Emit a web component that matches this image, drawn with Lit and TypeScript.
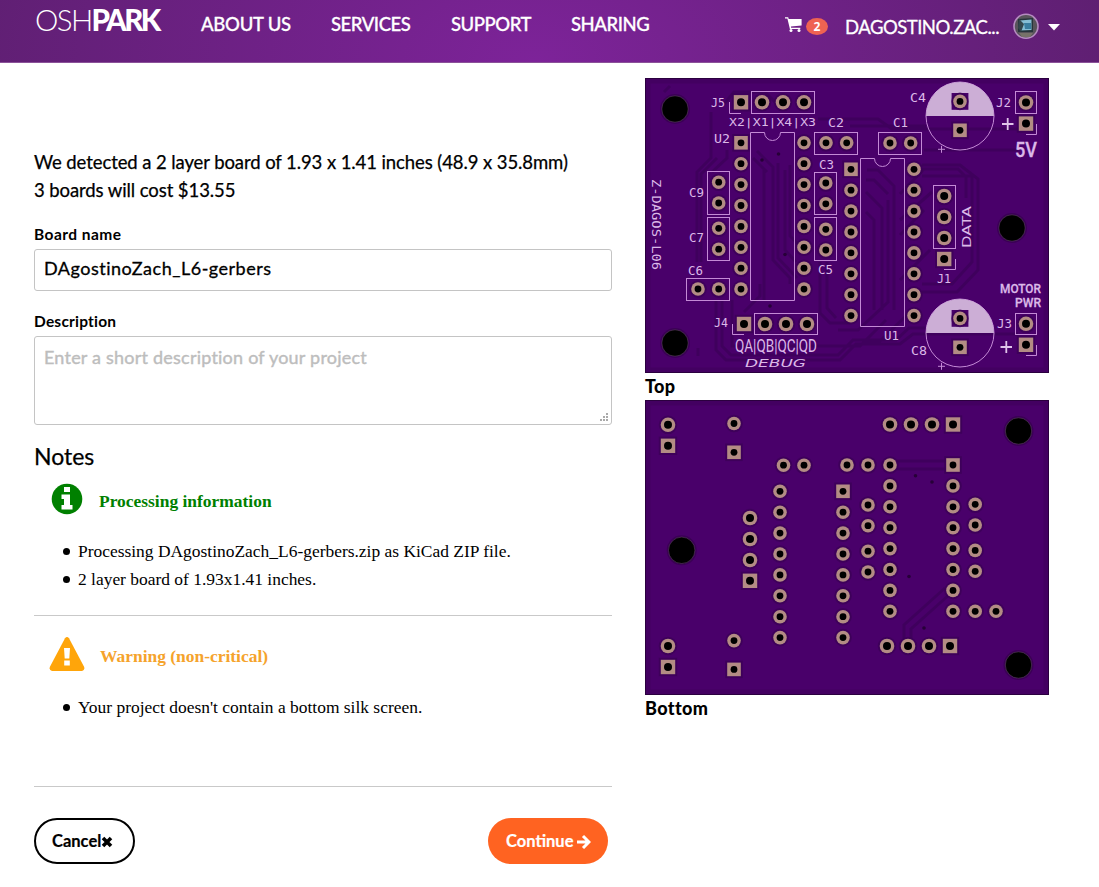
import { LitElement, html, svg, css } from "lit";
import { customElement } from "lit/decorators.js";

type Pt = [number, number];

const ring = (x: number, y: number, hole = 3.4) =>
  svg`<circle class="pad" cx=${x} cy=${y} r=${hole > 3.5 ? 7.3 : 6.8}></circle><circle class="drill" cx=${x} cy=${y} r=${hole}></circle>`;
const square = (x: number, y: number, hole = 3.4) => {
  const h = hole > 3.5 ? 7.2 : 6.8;
  return svg`<rect class="pad" x=${x - h} y=${y - h} width=${h * 2} height=${h * 2}></rect><circle class="drill" cx=${x} cy=${y} r=${hole}></circle>`;
};
const column = (x: number, y: number, n: number, first = false) =>
  Array.from({ length: n }, (_, i) => (first && i === 0 ? square(x, y) : ring(x, y + i * 20.9)));
const mount = (x: number, y: number) =>
  svg`<circle class="halo" cx=${x} cy=${y} r="15"></circle><circle class="mount" cx=${x} cy=${y} r="13.2"></circle>`;
const via = ([x, y]: Pt) => svg`<circle class="via" cx=${x} cy=${y} r="1.8"></circle>`;
const box = (x: number, y: number, x2: number, y2: number) =>
  svg`<rect class="silk" x=${x} y=${y} width=${x2 - x} height=${y2 - y}></rect>`;
const label = (t: string, x: number, y: number, w: number, size = 12.5, cls = "") =>
  svg`<text class="mark ${cls}" x=${x} y=${y} font-size=${size} textLength=${w} lengthAdjust="spacingAndGlyphs">${t}</text>`;
const cap = (cy: number) => svg`
  <circle class="silk" cx="960" cy=${cy} r="34"></circle>
  <path class="fill" d="M926 ${cy}a34 34 0 0 1 68 0z"></path>
  <rect class="board" x="951.6" y=${cy - 23} width="16.8" height="16.8"></rect>
  ${ring(960, cy - 14.6)}${square(960, cy + 14.3)}
  <path class="silk" d="M938 ${cy + 33.3}h7M941.5 ${cy + 29.8}v7"></path>`;

@customElement("pcb-top")
class PcbTop extends LitElement {
  static styles = css`
    :host { display: block; height: 295px; font-weight: 400; letter-spacing: 0; }
    svg { display: block; }
    .board { fill: #49006a; }
    .edge { fill: none; stroke: #2b003f; stroke-width: 1; }
    .inner { fill: none; stroke: #40005c; stroke-width: 5; opacity: 0.6; }
    .trace { fill: none; stroke: #3a0055; stroke-width: 3; opacity: 0.62; }
    .pad { fill: #b38c84; stroke: #3b0056; stroke-opacity: 0.75; stroke-width: 4; paint-order: stroke; }
    .drill, .mount { fill: #000; }
    .mount { stroke: #6a4a70; stroke-width: 0.5; }
    .halo { fill: #3b0056; }
    .via { fill: #270038; }
    .silk { fill: none; stroke: #c48ad6; stroke-width: 1; }
    .thick { fill: none; stroke: #e0c4ea; stroke-width: 1.8; }
    .fill { fill: #ccaed6; }
    .mark { fill: #dcb9e8; font-family: "DejaVu Sans Mono", monospace; }
    .narrow { font-family: "Roboto", sans-serif; }
    .medium { font-weight: 500; stroke: #dcb9e8; stroke-width: 0.3; }
    .wide { font-family: "DejaVu Sans", sans-serif; }
    .slant { font-style: oblique; }
  `;
  render() {
    return html`<svg width="404" height="295" viewBox="645 78 404 295">
      <rect class="board" x="645" y="78" width="404" height="295"></rect>
      <rect class="inner" x="648" y="81" width="398" height="289"></rect>
      <path class="trace" d="M711 112V158L697 172V262M717 158L701 174V262M724 104L734 92H765L782 109M727 150V158L712 172M753 158L767 172M757 151L773 167V260L790 278V284
        M764 170V300M778 163V258L797 278M785 170V250L796 262M790 165V236L798 244M716 300V350L726 360H840L856 344H900L913 334H1018M722 300V346L731 355H838L853 340H896L909 328H925
        M760 284V296L744 312M820 262V313L830 323H850M827 262V308L836 318M732 300V346H860L886 320M838 330H858L888 302V200M862 341H880L910 312M842 119H878L892 129H1018M850 126H926M924 150H1018
        M867 170H878L894 186V310M866 180H874L888 194M866 192L882 208V310M866 212L874 220V310M900 194L924 169H958L966 177V198M922 176H950L972 176V262L952 284H922M922 165H960L978 179V270L957 292H922
        M900 220L932 192M900 235L924 210M900 280L930 250M818 119H840M698 348V356M664 92L670 86"></path>
      ${mount(675, 109)}${mount(1012, 228)}${mount(675, 343)}
      ${([[762, 160], [778.5, 154], [785, 254.5], [770, 306]] as Pt[]).map(via)}
      ${square(741, 102.3, 4)}${[762, 783, 804].map((x) => ring(x, 102.3, 4))}
      ${square(744, 324, 4)}${[765, 786, 807].map((x) => ring(x, 324, 4))}
      ${[196, 217, 238].map((y) => ring(944.2, y, 4))}${square(944.2, 259, 4)}
      ${ring(1026, 102.5, 4)}${square(1026, 123.6, 4)}${ring(1026, 323.8, 4)}${square(1026, 344.8, 4)}
      ${column(741, 142.8, 8, true)}${column(804, 142.8, 8)}${column(851, 169.3, 8, true)}${column(914, 169.3, 8)}
      ${([[718.7, 182.2], [718.7, 203], [718.7, 228.3], [718.7, 249.2], [698, 289], [718.7, 289], [826, 142.8], [846.7, 142.8],
        [825.8, 183], [825.8, 203.8], [825.8, 229.3], [825.8, 250], [890, 143], [910.7, 143]] as Pt[]).map(([x, y]) => ring(x, y))}
      ${box(751.5, 91.5, 814.5, 113.5)}${box(814.5, 132.5, 857.5, 154.5)}${box(878.5, 132.5, 921.5, 154.5)}
      ${box(707.5, 171.5, 729.5, 214.5)}${box(707.5, 217.5, 729.5, 260.5)}${box(686.5, 278.5, 729.5, 300.5)}
      ${box(814.5, 172.5, 836.5, 214.5)}${box(814.5, 217.5, 836.5, 260.5)}${box(754.5, 313.5, 817.5, 334.5)}
      ${box(933.5, 185.5, 955.5, 248.5)}${box(1015.5, 91.5, 1036.5, 113.5)}${box(1015.5, 313.5, 1036.5, 334.5)}
      <path class="silk" d="M764.5 132.5H750.5V300.5H794.5V132.5H780.5A8 8 0 0 1 764.5 132.5M874.5 158.5H860.5V326.5H904.5V158.5H890.5A8 8 0 0 1 874.5 158.5
        M729.5 102V113.5H741M732.5 324V334.5H744M1036.5 124V134.5H1026M1036.5 345V355.5H1026M955.5 259V269.5H944"></path>
      <path class="thick" d="M1002 124H1013.5M1007.7 118V130M1000.5 347H1012M1006.3 341V353"></path>
      ${cap(116)}${cap(333)}
      ${label("J5", 711, 107, 14)}${label("U2", 714, 143, 16)}${label("C9", 689, 197, 15)}${label("C7", 689, 242, 15)}
      ${label("C6", 688, 275, 15)}${label("J4", 714, 327, 14)}${label("C2", 828, 127, 16)}${label("C3", 819, 169, 15)}
      ${label("C5", 818, 274, 15)}${label("C1", 893, 127, 15)}${label("C4", 910, 102, 16)}${label("J2", 996, 107, 15)}
      ${label("J1", 937, 283, 14)}${label("U1", 884, 340, 15)}${label("C8", 911, 355, 16)}${label("J3", 997, 328, 15)}
      ${label("X2|X1|X4|X3", 729, 126, 87, 10.5)}
      ${label("QA|QB|QC|QD", 735, 352, 82, 18.5, "narrow")}
      ${label("DEBUG", 745, 367, 61, 11, "wide slant")}
      ${label("5V", 1015, 157, 22, 19.5, "narrow medium")}
      ${label("MOTOR", 1000, 293, 41, 13.5, "narrow medium")}${label("PWR", 1015, 307, 26, 13.5, "narrow medium")}
      <g transform="translate(970.5 248) rotate(-90)">${label("DATA", 0, 0, 42, 12.5, "wide")}</g>
      <g transform="translate(652 179) rotate(90)">${label("Z-DAGOS-L06", 0, 0, 91, 12.5)}</g>
      <rect class="edge" x="645.5" y="78.5" width="403" height="294"></rect>
    </svg>`;
  }
}

@customElement("pcb-bottom")
class PcbBottom extends LitElement {
  static styles = PcbTop.styles;
  render() {
    return html`<svg width="404" height="295" viewBox="645 400 404 295">
      <rect class="board" x="645" y="400" width="404" height="295"></rect>
      <rect class="inner" x="648" y="403" width="398" height="289"></rect>
      <path class="trace" d="M897 461H946M897 469H946M945 588L904 625V640M950 594L911 629V640"></path>
      ${mount(1018.5, 431)}${mount(681.7, 550.3)}${mount(1018.5, 665)}
      ${([[915.5, 475.7], [932, 482], [909, 576.5], [924, 628]] as Pt[]).map(via)}
      ${ring(668, 424.8, 4)}${square(668, 445.8, 4)}${ring(668, 646, 4)}${square(668, 667, 4)}
      ${ring(734, 423.5)}${square(734, 452.3)}${ring(734, 640.6)}${square(734, 669.4)}
      ${[890, 911, 932].map((x) => ring(x, 424.5, 4))}${square(953, 424.5, 4)}
      ${[887, 908, 929].map((x) => ring(x, 646, 4))}${square(950, 646, 4)}
      ${[518, 539, 560].map((y) => ring(750, y, 4))}${square(750, 580.8, 4)}
      ${column(780, 491.3, 8)}${column(843, 491.3, 8, true)}${column(890, 465, 8)}${column(953, 465, 8, true)}
      ${([[783.5, 465.2], [804, 465.2], [847, 465], [868, 465], [868, 505], [868, 525.7], [868, 551.2], [868, 572],
        [975.2, 504.3], [975.2, 525], [975.2, 550.4], [975.2, 571.3], [975.2, 611.3], [996, 611.3]] as Pt[]).map(([x, y]) => ring(x, y))}
      <rect class="edge" x="645.5" y="400.5" width="403" height="294"></rect>
    </svg>`;
  }
}

@customElement("app-root")
class AppRoot extends LitElement {
  static styles = css`
    :host { display: block; height: 887px; overflow: hidden; background: #fff; color: #000; font-family: "Lato", sans-serif; }
    * { box-sizing: border-box; }
    svg { display: block; flex: none; }
    header { height: 63px; display: flex; align-items: flex-start; padding-left: 35px; color: #fff; white-space: nowrap;
      border-bottom: 1px solid #8b5299; background: radial-gradient(ellipse 590px 330px at 535px 60px, #7d2399, #5e1f71); }
    .logo { width: 166px; font-size: 29.5px; line-height: 36px; padding-top: 2px; font-weight: 300; letter-spacing: -1.6px; }
    .logo b { font-weight: 900; letter-spacing: -2.6px; }
    nav { display: flex; gap: 40px; padding-top: 12px; width: 584px; font-size: 18.5px; line-height: 24px; letter-spacing: -0.45px; }
    .n { font-weight: 500; -webkit-text-stroke: 0.3px #fff; }
    .n1 { width: 90px; letter-spacing: -0.25px; } .n2 { width: 80px; } .n3 { width: 80px; }
    .cart { margin-top: 16px; }
    .badge { margin: 18px 0 0 4px; width: 22px; height: 17px; border-radius: 50%; background: #ee6352; text-align: center; font: 700 12px/17px "Open Sans", sans-serif; }
    .user { margin: 15px 0 0 17px; width: 168px; font-size: 18.5px; line-height: 24px; letter-spacing: -0.5px; -webkit-text-stroke: 0.3px #fff; }
    .avatar { margin-top: 13px; }
    .caret { margin: 24px 0 0 9px; }
    main { display: grid; grid-template-columns: 578px 404px; column-gap: 33px; padding-left: 34px; }
    .lead { margin: 85px 0 0; font-size: 18.5px; line-height: 28px; letter-spacing: -0.09px; -webkit-text-stroke: 0.25px #000; }
    .lead span { display: block; white-space: nowrap; }
    .field { display: block; margin-top: 20px; font-size: 15.5px; line-height: 20px; font-weight: 700; letter-spacing: 0.45px; }
    .field2 { letter-spacing: 0.2px; }
    .input { margin-top: 5px; height: 42px; border: 1px solid #c4c4c4; border-radius: 3px; padding: 0 9px; font-size: 18px; line-height: 37px; letter-spacing: 0.5px; -webkit-text-stroke: 0.3px #000; }
    .area { height: 89px; display: flex; align-items: flex-end; justify-content: space-between; padding: 0 3px 2px 9px; letter-spacing: 0.22px; color: #bdbdbd; -webkit-text-stroke: 0.4px #bdbdbd; }
    .area span { align-self: flex-start; line-height: 41px; }
    h2 { margin: 16px 0 0; font-size: 23px; line-height: 30px; font-weight: 400; -webkit-text-stroke: 0.25px #000; }
    .note { display: flex; align-items: center; font: 700 17.44px/24px "Liberation Serif", serif; }
    .info { margin-top: 12px; padding-left: 17px; gap: 16px; height: 32px; color: green; }
    .warn { margin-top: 20px; padding-left: 15px; gap: 15px; height: 36px; color: #f5a32c; }
    .label { padding-top: 4px; }
    ul { margin: 22px 0 0; padding: 0; list-style: none; font: 17.44px/28px "Liberation Serif", serif; }
    .ul2 { margin-top: 21px; }
    li { display: flex; align-items: center; gap: 8px; padding-left: 29px; white-space: nowrap; }
    li::before { content: ""; width: 7px; height: 7px; border-radius: 50%; background: #000; margin-top: 1px; }
    .rule { height: 1px; background: #c9c9c9; }
    .r1 { margin-top: 22px; } .r2 { margin-top: 65px; }
    .actions { display: flex; justify-content: space-between; padding: 31px 4px 0 0; }
    .btn { display: flex; align-items: center; height: 46px; border-radius: 23px; font-size: 16.5px; font-weight: 700; }
    .cancel { width: 101px; border: 2px solid #000; padding-left: 16px; -webkit-text-stroke: 0.2px #000; }
    .go { width: 120px; padding-left: 18px; gap: 4px; background: #ff6321; color: #fff; -webkit-text-stroke: 0.2px #fff; }
    .previews { padding-top: 15px; font-size: 18px; font-weight: 900; letter-spacing: 0.35px; }
    .name { height: 27px; line-height: 26px; }
  `;
  render() {
    return html`
      <header>
        <div class="logo">OSH<b>PARK</b></div>
        <nav><span class="n n1">ABOUT US</span><span class="n n2">SERVICES</span><span class="n n3">SUPPORT</span><span class="n">SHARING</span></nav>
        <svg class="cart" width="17" height="17" viewBox="0 0 17 17" fill="#fff">
          <path d="M0 1.2h3.2l.5 1.7H16.6V9.4L5.9 10.6l.2 1.1H15.3V13H4.9L2.4 2.5H0z"></path>
          <circle cx="6" cy="14.5" r="1.5"></circle><circle cx="14" cy="14.5" r="1.5"></circle>
        </svg>
        <span class="badge">2</span>
        <span class="user">DAGOSTINO.ZAC...</span>
        <svg class="avatar" width="26" height="27" viewBox="0 0 26 27">
          <circle cx="13" cy="13.3" r="12" fill="#57545a" stroke="#b58cc0" stroke-width="1.6"></circle>
          <path d="M5 6L20 5V19H5z" fill="#26343b"></path><path d="M7 7.5L18.5 6.5V17L7 17.5z" fill="#84bdd3"></path>
          <path d="M6 6L11 11L8 19L5 15z" fill="#33464c"></path><path d="M11 10H18V16H12z" fill="#387d9e"></path>
          <path d="M6 20H20L17 24H9z" fill="#777269"></path>
        </svg>
        <svg class="caret" width="12" height="7" viewBox="0 0 12 7" fill="#fff"><path d="M0 0H12L6 6.5z"></path></svg>
      </header>
      <main>
        <section>
          <p class="lead"><span>We detected a 2 layer board of 1.93 x 1.41 inches (48.9 x 35.8mm)</span><span>3 boards will cost $13.55</span></p>
          <label class="field">Board name</label>
          <div class="input">DAgostinoZach_L6-gerbers</div>
          <label class="field field2">Description</label>
          <div class="input area"><span>Enter a short description of your project</span>
            <svg width="9" height="9" viewBox="0 0 9 9" fill="#aaa"><path d="M7 0h2v2H7zM4 3h2v2H4zM7 3h2v2H7zM1 6h2v2H1zM4 6h2v2H4zM7 6h2v2H7z"></path></svg>
          </div>
          <h2>Notes</h2>
          <div class="note info">
            <svg width="32" height="32" viewBox="0 0 32 32"><circle cx="16" cy="16" r="15.3" fill="green"></circle>
              <path fill="#fff" d="M13 4h6v5h-6zM10.5 11.5H19V22h2.5v4.5h-11V22H13v-6h-2.5z"></path></svg>
            <span class="label">Processing information</span>
          </div>
          <ul><li>Processing DAgostinoZach_L6-gerbers.zip as KiCad ZIP file.</li><li>2 layer board of 1.93x1.41 inches.</li></ul>
          <div class="rule r1"></div>
          <div class="note warn">
            <svg width="36" height="36" viewBox="0 0 36 36"><path fill="#ffa50a" d="M16 2.2Q18-.4 20 2.2L35.2 31Q36 34.5 33 35H3Q0 34.5.8 31z"></path>
              <path fill="#fff" d="M15 12h6l-.7 10.5h-4.6zM15.2 24.5h5.6v5h-5.6z"></path></svg>
            <span class="label">Warning (non-critical)</span>
          </div>
          <ul class="ul2"><li>Your project doesn't contain a bottom silk screen.</li></ul>
          <div class="rule r2"></div>
          <div class="actions">
            <div class="btn cancel">Cancel<svg width="12" height="13" viewBox="0 0 12 13"><path d="M2 3L10 11M10 3L2 11" stroke="#000" stroke-width="3.6"></path></svg></div>
            <div class="btn go">Continue<svg width="14" height="15" viewBox="0 0 14 15" fill="none" stroke="#fff" stroke-width="3"><path d="M0 8H11M6 2L12 8L6 14"></path></svg></div>
          </div>
        </section>
        <aside class="previews">
          <pcb-top></pcb-top><div class="name">Top</div>
          <pcb-bottom></pcb-bottom><div class="name">Bottom</div>
        </aside>
      </main>`;
  }
}
